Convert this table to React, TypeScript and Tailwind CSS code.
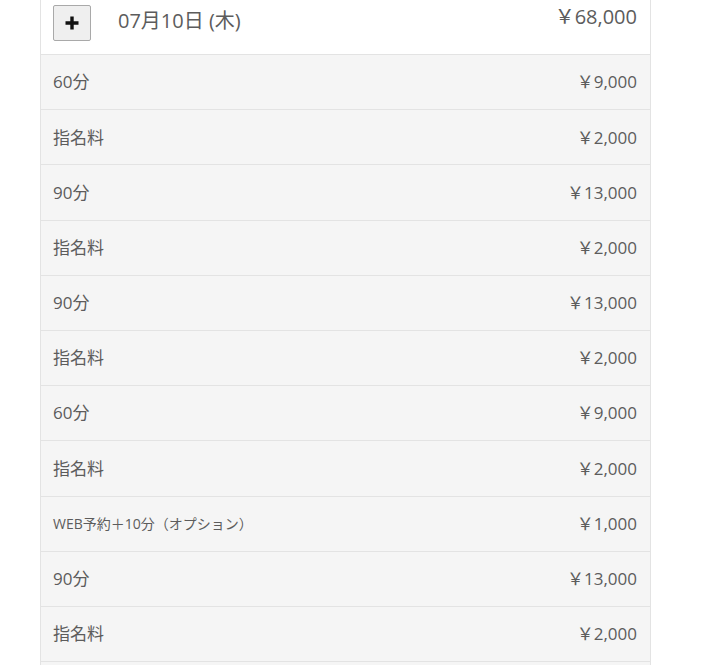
import React from "react";

const rows: [string, string, boolean?][] = [
  ["60分", "9,000"],
  ["指名料", "2,000"],
  ["90分", "13,000"],
  ["指名料", "2,000"],
  ["90分", "13,000"],
  ["指名料", "2,000"],
  ["60分", "9,000"],
  ["指名料", "2,000"],
  ["WEB予約＋10分（オプション）", "1,000", true],
  ["90分", "13,000"],
  ["指名料", "2,000"],
];

export default function App() {
  return (
    <div
      className="w-[702px] h-[665px] overflow-hidden bg-white text-[#5c5c5c]"
      style={{ fontFamily: '"Open Sans", "Noto Sans CJK JP", sans-serif' }}
    >
      <div className="ml-[40px] w-[611px] border-x border-[#e3e3e3] -mt-px">
        <div className="h-[56px] bg-white border-b border-[#e3e3e3] flex items-start justify-between pt-[6px] pl-[12px] pr-[13px]">
          <div className="flex items-start">
            <button className="w-[38px] h-[36px] rounded-[2px] border border-[#a9a9a9] bg-[#efefef] flex items-center justify-center">
              <svg width="16" height="16" viewBox="0 0 16 16">
                <path d="M6.3 1.5h3.4v4.8h4.8v3.4H9.7v4.8H6.3V9.7H1.5V6.3h4.8z" fill="#111" />
              </svg>
            </button>
            <span className="ml-[27px] mt-[6px] text-[20px] leading-none">07月10日 (木)</span>
          </div>
          <span className="mt-[2px] text-[20px] leading-none">￥68,000</span>
        </div>
        {rows.map(([label, price, small], i) => (
          <div
            key={i}
            className="h-[55.2px] bg-[#f5f5f5] border-b border-[#e3e3e3] flex items-center justify-between pl-[12px] pr-[13px]"
          >
            <span className={small ? "text-[14px]" : "text-[17px]"}>{label}</span>
            <span className="text-[17px]">￥{price}</span>
          </div>
        ))}
        <div className="h-[55px] bg-[#f5f5f5]" />
      </div>
    </div>
  );
}
